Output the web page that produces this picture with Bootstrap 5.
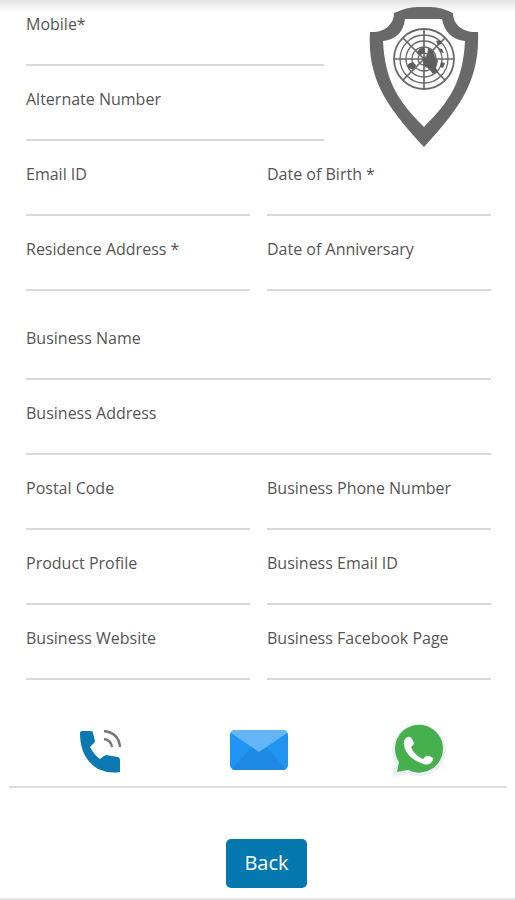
<!DOCTYPE html>
<html lang="en">
<head>
<meta charset="utf-8">
<meta name="viewport" content="width=device-width, initial-scale=1">
<title>Member profile</title>
<link href="https://cdn.jsdelivr.net/npm/bootstrap@5.3.0/dist/css/bootstrap.min.css" rel="stylesheet">
<style>
body { font-family: "Open Sans", sans-serif; font-size: 16px; line-height: 24px; color: #555; background: #fff; }
.top-shade { height: 12px; background: linear-gradient(#e2e2e2, #fff); }
.profile { padding: 0 24px 0 26px; }
.pair { display: grid; grid-template-columns: 1fr 1fr; column-gap: 17px; }
.field { margin-bottom: 21px; min-width: 0; }
.field label { display: block; }
.field input { height: 30px; padding: 0; border: 0; border-bottom: 2px solid #d8d8d8; border-radius: 0; background: none; color: #505050; }
.emblem { width: 110px; margin: -6px 12px 0 45px; }
.business { margin-top: 14px; }
.contacts.row { margin: 42px 8px 0 9px; padding: 0 9px 0 11px; height: 66px; border-bottom: 2px solid #dcdcdc; }
.foot { padding: 51px 0 10px 18px; border-bottom: 2px solid #e6e6e6; }
.btn-back { background: #0678b0; color: #fff; font-size: 20px; line-height: 30px; padding: 9px 18px 10px; border: 0; border-radius: 5px; }
.btn-back:hover { background: #05699a; color: #fff; }
</style>
<script defer src="https://cdn.jsdelivr.net/npm/bootstrap@5.3.0/dist/js/bootstrap.bundle.min.js"></script>
</head>
<body>
<div class="top-shade"></div>
<main>
<form class="profile">
  <div class="d-flex align-items-start">
    <div class="flex-grow-1">
      <div class="field"><label for="mobile">Mobile*</label><input class="form-control shadow-none" id="mobile" type="tel"></div>
      <div class="field"><label for="alt">Alternate Number</label><input class="form-control shadow-none" id="alt" type="tel"></div>
    </div>
    <svg class="emblem flex-shrink-0" viewBox="0 0 110 142" role="img" aria-label="Shield emblem">
      <path fill="#696969" fill-rule="evenodd" d="M25 7Q38 1 48 1H62Q72 1 84 7C84 18 93 27 109 26C111 75 90 103 55 141C20 103-2 75 1 26C16 27 25 18 25 7ZM36 13C35 25 27 34 14 35C16 76 30 96 55 121C80 96 94 76 96 35C83 34 75 25 73 13Z"/>
      <g fill="none" stroke="#696969" stroke-width="1.3">
        <circle cx="55" cy="53" r="30" stroke-width="1.8"/><circle cx="55" cy="53" r="24"/><circle cx="55" cy="53" r="18"/><circle cx="55" cy="53" r="12"/><circle cx="55" cy="53" r="6"/>
        <path stroke-width="1.7" d="M25 53H85M55 23V83M34 32L76 74M76 32L34 74"/>
      </g>
      <path fill="#5e5e5e" d="M59 42l5 3 2 6 3 4-2 7 2 4-5 2-4-5-5-3-1-6 4-3zM50 43l5-2 1 5-5 3-3-2zM39 58l5-2 3 3-2 5-6-2zM67 35l4-1 2 4-4 1zM69 42l4 1 2 4-4-1zM72 56l4 1-2 5-3-1z"/>
    </svg>
  </div>
  <div class="pair">
    <div class="field"><label for="email">Email ID</label><input class="form-control shadow-none" id="email" type="email"></div>
    <div class="field"><label for="dob">Date of Birth *</label><input class="form-control shadow-none" id="dob" type="text"></div>
    <div class="field"><label for="res">Residence Address *</label><input class="form-control shadow-none" id="res" type="text"></div>
    <div class="field"><label for="anniv">Date of Anniversary</label><input class="form-control shadow-none" id="anniv" type="text"></div>
  </div>
  <div class="business">
    <div class="field"><label for="bname">Business Name</label><input class="form-control shadow-none" id="bname" type="text"></div>
    <div class="field"><label for="baddr">Business Address</label><input class="form-control shadow-none" id="baddr" type="text"></div>
    <div class="pair">
      <div class="field"><label for="postal">Postal Code</label><input class="form-control shadow-none" id="postal" type="text"></div>
      <div class="field"><label for="bphone">Business Phone Number</label><input class="form-control shadow-none" id="bphone" type="tel"></div>
      <div class="field"><label for="product">Product Profile</label><input class="form-control shadow-none" id="product" type="text"></div>
      <div class="field"><label for="bemail">Business Email ID</label><input class="form-control shadow-none" id="bemail" type="email"></div>
      <div class="field mb-0"><label for="site">Business Website</label><input class="form-control shadow-none" id="site" type="url"></div>
      <div class="field mb-0"><label for="fb">Business Facebook Page</label><input class="form-control shadow-none" id="fb" type="url"></div>
    </div>
  </div>
</form>
<nav class="contacts row g-0 text-center" aria-label="Contact">
  <div class="col"><a href="#call" aria-label="Call"><svg width="44" height="56" viewBox="0 0 44 56">
    <path fill="#0b78b2" d="M4 9h9q2 0 2 2l2 8-1 2-4 4q4 8 10 12l4-3 2-1 12 2q2 1 2 3v12q-11 2-22-3Q2 36 2 11 2 9 4 9Z"/>
    <path fill="none" stroke="#777" stroke-width="2.400" d="M26 9Q41 11 42 25M26 17Q33 18 34 25"/></svg></a></div>
  <div class="col"><a href="#mail" aria-label="Email"><svg width="58" height="56" viewBox="0 0 58 56">
    <rect x="0" y="8" width="58" height="40" rx="5" fill="#2094f2"/>
    <path fill="#1e88e5" d="M2 47L22 25L29 30L36 25L56 47Q55 48 53 48H5Q3 48 2 47Z"/>
    <path fill="#64b5f6" d="M1 11Q2 8 5 8H53Q56 8 57 11L29 30Z"/></svg></a></div>
  <div class="col"><a href="#whatsapp" aria-label="WhatsApp"><svg width="56" height="56" viewBox="0 0 56 56">
    <path fill="#eceff1" d="M2 55L5 41Q2 35 2 28A27 26 0 1 1 18 52Z"/>
    <path fill="#46b04e" d="M7 50L9 40Q5 34 5 27A24 24 0 1 1 18 48Z"/>
    <path fill="#fff" d="M16 16Q20 13 22 17L24 21Q24 23 21 25Q24 33 33 37L36 34Q38 33 43 36Q44 38 41 41Q37 44 31 41Q16 35 14 23Q13 18 16 16Z"/></svg></a></div>
</nav>
<div class="foot text-center"><button type="button" class="btn btn-back">Back</button></div>
</main>
</body>
</html>
